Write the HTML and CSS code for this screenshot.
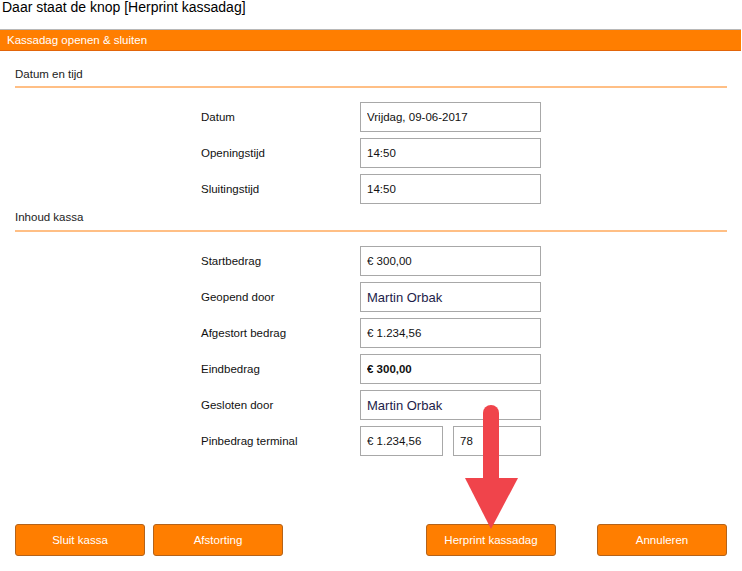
FILE: index.html
```html
<!DOCTYPE html>
<html lang="nl">
<head>
    <meta charset="UTF-8">
    <title>Kassadag openen &amp; sluiten</title>
    <link rel="stylesheet" href="styles.css">
</head>
<body>
    <div class="caption">Daar staat de knop [Herprint kassadag]</div>
    <div class="panel">
        <div class="panel-header">Kassadag openen &amp; sluiten</div>

        <div class="section-title">Datum en tijd</div>
        <div class="rows">
            <div class="row">
                <label>Datum</label>
                <input class="field" type="text" value="Vrijdag, 09-06-2017" readonly>
            </div>
            <div class="row">
                <label>Openingstijd</label>
                <input class="field" type="text" value="14:50" readonly>
            </div>
            <div class="row">
                <label>Sluitingstijd</label>
                <input class="field" type="text" value="14:50" readonly>
            </div>
        </div>

        <div class="section-title second">Inhoud kassa</div>
        <div class="rows">
            <div class="row">
                <label>Startbedrag</label>
                <input class="field" type="text" value="€ 300,00" readonly>
            </div>
            <div class="row">
                <label>Geopend door</label>
                <input class="field name" type="text" value="Martin Orbak" readonly>
            </div>
            <div class="row">
                <label>Afgestort bedrag</label>
                <input class="field" type="text" value="€ 1.234,56" readonly>
            </div>
            <div class="row">
                <label>Eindbedrag</label>
                <input class="field bold" type="text" value="€ 300,00" readonly>
            </div>
            <div class="row">
                <label>Gesloten door</label>
                <input class="field name" type="text" value="Martin Orbak" readonly>
            </div>
            <div class="row">
                <label>Pinbedrag terminal</label>
                <div class="split">
                    <input class="field small" type="text" value="€ 1.234,56" readonly>
                    <input class="field smaller" type="text" value="78" readonly>
                </div>
            </div>
        </div>

        <div class="actions">
            <div class="group">
                <button class="btn">Sluit kassa</button>
                <button class="btn">Afstorting</button>
            </div>
            <div class="group right">
                <button class="btn">Herprint kassadag</button>
                <button class="btn">Annuleren</button>
            </div>
        </div>
    </div>

    <!-- pointer arrow on top of the screenshot -->
    <svg class="arrow" width="56" height="128" viewBox="0 0 56 128">
        <rect x="19" y="1" width="16" height="84" rx="8" fill="#f0444b"/>
        <polygon points="1,74 54,74 27,125" fill="#f0444b"/>
    </svg>
</body>
</html>
```

FILE: styles.css
```css
body {
    margin: 0;
    font-family: 'Liberation Sans', Arial, sans-serif;
    color: #111;
    background: #fff;
    position: relative;
}

.caption {
    height: 29px;
    padding-left: 2px;
    font-size: 14px;
    line-height: 14px;
    color: #000;
}

.panel-header {
    height: 20px;
    line-height: 20px;
    padding-left: 7px;
    border-top: 1px solid #b8b8b8;
    border-bottom: 1px solid #e2650a;
    background-color: #ff7e00;
    color: #fff;
    font-size: 11.5px;
    margin-right: 1px;
}

.section-title {
    margin: 0 15px;
    padding: 16px 0 5px;
    font-size: 11.5px;
    line-height: 14px;
    color: #222;
    border-bottom: 2px solid #ffbf85;
}

.section-title.second {
    padding-top: 6px;
    padding-bottom: 6px;
}

.rows {
    display: flex;
    flex-direction: column;
    gap: 6px;
    margin-top: 14px;
    padding-left: 201px;
}

.row {
    display: flex;
    align-items: center;
    height: 30px;
}

.row label {
    width: 159px;
    font-size: 11.5px;
    color: #111;
}

.field {
    box-sizing: border-box;
    width: 181px;
    height: 30px;
    margin: 0;
    padding: 0 0 0 6px;
    border: 1px solid #a8a8a8;
    background: #fff;
    font-family: 'Liberation Sans', Arial, sans-serif;
    font-size: 11.5px;
    color: #111;
    outline: none;
}

.field.name {
    font-size: 13px;
    color: #1d1d4a;
}

.field.bold {
    font-weight: bold;
}

.split {
    display: flex;
    gap: 10px;
}

.field.small {
    width: 83px;
}

.field.smaller {
    width: 88px;
}

.actions {
    display: flex;
    justify-content: space-between;
    margin-top: 68px;
    padding: 0 15px;
}

.group {
    display: flex;
    gap: 8px;
}

.group.right {
    gap: 41px;
}

.btn {
    width: 130px;
    height: 32px;
    border: 1px solid #b4631a;
    border-radius: 3px;
    background-color: #ff7e00;
    color: #fff;
    font-family: 'Liberation Sans', Arial, sans-serif;
    font-size: 11.5px;
    cursor: pointer;
}

.arrow {
    position: absolute;
    left: 464px;
    top: 404px;
}
```
